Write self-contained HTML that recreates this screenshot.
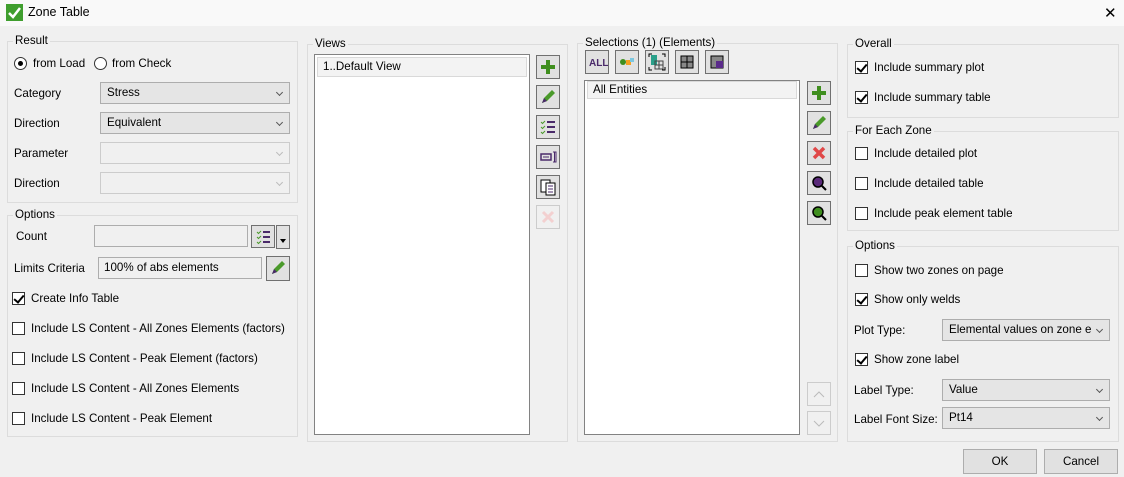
<!DOCTYPE html>
<html><head><meta charset="utf-8"><style>
*{box-sizing:border-box;margin:0;padding:0}
body{width:1124px;height:477px;background:#f0f0f0;font-family:"Liberation Sans",sans-serif;font-size:11.6px;color:#000;position:relative;overflow:hidden}
.a{position:absolute}
.title{left:0;top:0;width:1124px;height:26px;background:#f9f9f9}
.grp{position:absolute;border:1px solid #dcdcdc}
.lg{position:absolute;background:#f0f0f0;padding:0 2px;top:-9px;left:5px;line-height:16px}
.cb{position:absolute;width:13px;height:13px;border:1px solid #333;background:#fff}
.cb.on::after{content:"";position:absolute;left:3px;top:0px;width:4px;height:8px;border:solid #000;border-width:0 2px 2px 0;transform:rotate(40deg)}
.sel{position:absolute;height:22px;border:1px solid #adadad;background:#e5e5e5;padding-left:6px;line-height:20px}
.sel::after{content:"";position:absolute;right:7px;top:7px;width:4px;height:4px;border:solid #555;border-width:0 1px 1px 0;transform:rotate(45deg)}
.sel.dis{border-color:#ccc;background:#f0f0f0}
.sel.dis::after{border-color:#bbb}
.tb{position:absolute;height:22px;border:1px solid #adadad;background:#f0f0f0;padding-left:5px;line-height:20px}
.btn{position:absolute;width:24px;height:24px;border:1px solid #707070;background:#e1e1e1}
.btn.dis{border-color:#ccc;background:#f0f0f0}
.list{position:absolute;border:1px solid #828282;background:#fff}
.item{position:absolute;left:2px;right:2px;top:2px;height:20px;background:#f3f3f3;border:1px solid #d9d9d9;padding-left:5px;line-height:18px}
.pb{position:absolute;width:74px;height:25px;border:1px solid #adadad;background:#e1e1e1;text-align:center;line-height:23px}
svg{position:absolute;left:0;top:0}
</style></head><body>
<div class="a title"></div>
<div class="a" style="left:6px;top:4px;width:17px;height:17px;background:#3f9e2e"><svg width="17" height="17"><path d="M3 9 L7 13 L14 4" stroke="#fff" stroke-width="2.5" fill="none"/></svg></div>
<div class="a" style="left:28px;top:5px;font-size:12.5px">Zone Table</div>
<div class="a" style="left:1104px;top:4px;font-size:15px">✕</div>

<div class="grp" style="left:7px;top:41px;width:291px;height:162px"><div class="lg">Result</div></div>
<div class="a" style="left:14px;top:57px;width:13px;height:13px;border:1px solid #333;border-radius:50%;background:#fff"><div style="position:absolute;left:3px;top:3px;width:5px;height:5px;border-radius:50%;background:#000"></div></div>
<div class="a" style="left:33px;top:57px">from Load</div>
<div class="a" style="left:94px;top:57px;width:13px;height:13px;border:1px solid #333;border-radius:50%;background:#fff"></div>
<div class="a" style="left:112px;top:57px">from Check</div>
<div class="a" style="left:14px;top:87px">Category</div>
<div class="sel" style="left:100px;top:82px;width:190px">Stress</div>
<div class="a" style="left:14px;top:117px">Direction</div>
<div class="sel" style="left:100px;top:112px;width:190px">Equivalent</div>
<div class="a" style="left:14px;top:147px">Parameter</div>
<div class="sel dis" style="left:100px;top:142px;width:190px"></div>
<div class="a" style="left:14px;top:177px">Direction</div>
<div class="sel dis" style="left:100px;top:172px;width:190px"></div>

<div class="grp" style="left:7px;top:215px;width:291px;height:222px"><div class="lg">Options</div></div>
<div class="a" style="left:16px;top:230px">Count</div>
<div class="tb" style="left:94px;top:225px;width:154px"></div>
<div class="btn" style="left:251px;top:225px;height:23px"><svg width="22" height="22"><path d="M5 6l1.5 1.5L9 5M5 11l1.5 1.5L9 10M5 16l1.5 1.5L9 15" stroke="#4a9a2a" fill="none"/><path d="M11 6h7M11 11h7M11 16h7" stroke="#4a2a6a" stroke-width="2"/></svg></div>
<div class="btn" style="left:276px;top:225px;width:14px;height:24px"><svg width="12" height="22"><path d="M3 13h6l-3 4z" fill="#000"/></svg></div>
<div class="a" style="left:14px;top:262px">Limits Criteria</div>
<div class="tb" style="left:98px;top:257px;width:164px">100% of abs elements</div>
<div class="btn" style="left:266px;top:256px;width:24px;height:25px"><svg width="22" height="22"><path d="M5 17l2-5 8-8 3 3-8 8z" fill="#4a9a2a"/><path d="M5 17l2-5 3 3z" fill="#4a2a6a"/></svg></div>
<div class="cb on" style="left:12px;top:292px"></div><div class="a" style="left:31px;top:292px">Create Info Table</div>
<div class="cb" style="left:12px;top:322px"></div><div class="a" style="left:31px;top:322px">Include LS Content - All Zones Elements (factors)</div>
<div class="cb" style="left:12px;top:352px"></div><div class="a" style="left:31px;top:352px">Include LS Content - Peak Element (factors)</div>
<div class="cb" style="left:12px;top:382px"></div><div class="a" style="left:31px;top:382px">Include LS Content - All Zones Elements</div>
<div class="cb" style="left:12px;top:412px"></div><div class="a" style="left:31px;top:412px">Include LS Content - Peak Element</div>

<div class="grp" style="left:307px;top:44px;width:261px;height:398px"><div class="lg">Views</div></div>
<div class="list" style="left:314px;top:54px;width:216px;height:381px"><div class="item">1..Default View</div></div>
<div class="btn" style="left:536px;top:55px"><svg width="22" height="22"><path d="M11 4v14M4 11h14" stroke="#3f8e1e" stroke-width="4"/></svg></div>
<div class="btn" style="left:536px;top:85px"><svg width="22" height="22"><path d="M5 17l2-5 8-8 3 3-8 8z" fill="#4a9a2a"/><path d="M5 17l2-5 3 3z" fill="#4a2a6a"/></svg></div>
<div class="btn" style="left:536px;top:115px"><svg width="22" height="22"><path d="M4 6l1.5 1.5L8 5M4 11l1.5 1.5L8 10M4 16l1.5 1.5L8 15" stroke="#4a9a2a" fill="none"/><path d="M10 6h8M10 11h8M10 16h8" stroke="#4a2a6a" stroke-width="2"/></svg></div>
<div class="btn" style="left:536px;top:145px"><svg width="22" height="22"><rect x="4" y="8" width="10" height="6" fill="none" stroke="#4a2a6a" stroke-width="1.5"/><path d="M6 11h6M16 6h3v10h-3M17.5 6v10" stroke="#4a2a6a" fill="none"/></svg></div>
<div class="btn" style="left:536px;top:175px"><svg width="22" height="22"><rect x="4" y="4" width="9" height="12" fill="#fff" stroke="#000"/><rect x="9" y="7" width="9" height="12" fill="#fff" stroke="#000"/><path d="M11 10h5M11 13h5M11 16h5" stroke="#4a2a6a"/></svg></div>
<div class="btn dis" style="left:536px;top:205px"><svg width="22" height="22"><path d="M6 6l10 10M16 6L6 16" stroke="#f3d0d0" stroke-width="3"/></svg></div>

<div class="grp" style="left:577px;top:43px;width:261px;height:399px"><div class="lg">Selections (1) (Elements)</div></div>
<div class="btn" style="left:585px;top:50px"><svg width="22" height="22"><text x="3" y="15" font-family="Liberation Sans" font-weight="bold" font-size="10" fill="#4a2a6a">ALL</text></svg></div>
<div class="btn" style="left:615px;top:50px"><svg width="22" height="22"><circle cx="7" cy="11" r="3" fill="#3f8e1e"/><rect x="10" y="9" width="5" height="5" fill="#f4a020"/><rect x="14" y="7" width="4" height="4" fill="#7bc7e0"/></svg></div>
<div class="btn" style="left:645px;top:50px"><svg width="22" height="22"><rect x="5" y="4" width="6" height="10" fill="#2aa08a"/><rect x="9" y="10" width="8" height="8" fill="none" stroke="#444"/><path d="M13 10v8M9 14h8" stroke="#444"/><path d="M3 6V3h3M19 6V3h-3M3 16v3h3M19 16v3h-3" stroke="#000" fill="none"/></svg></div>
<div class="btn" style="left:675px;top:50px"><svg width="22" height="22"><rect x="5" y="5" width="12" height="12" fill="#888" stroke="#000"/><path d="M11 5v12M5 11h12" stroke="#000"/></svg></div>
<div class="btn" style="left:705px;top:50px"><svg width="22" height="22"><rect x="5" y="5" width="12" height="12" fill="#888" stroke="#000"/><rect x="10" y="10" width="7" height="7" fill="#5a2a8a"/></svg></div>
<div class="list" style="left:584px;top:80px;width:216px;height:355px"><div class="item" style="top:0;height:18px;line-height:16px">All Entities</div></div>
<div class="btn" style="left:807px;top:81px"><svg width="22" height="22"><path d="M11 4v14M4 11h14" stroke="#3f8e1e" stroke-width="4"/></svg></div>
<div class="btn" style="left:807px;top:111px"><svg width="22" height="22"><path d="M5 17l2-5 8-8 3 3-8 8z" fill="#4a9a2a"/><path d="M5 17l2-5 3 3z" fill="#4a2a6a"/></svg></div>
<div class="btn" style="left:807px;top:141px"><svg width="22" height="22"><path d="M6 6l10 10M16 6L6 16" stroke="#e04848" stroke-width="3.5"/></svg></div>
<div class="btn" style="left:807px;top:171px"><svg width="22" height="22"><circle cx="10" cy="10" r="5" fill="#5a2a7a" stroke="#000" stroke-width="1.5"/><path d="M14 14l4 4" stroke="#000" stroke-width="2"/></svg></div>
<div class="btn" style="left:807px;top:201px"><svg width="22" height="22"><circle cx="10" cy="10" r="5" fill="#3f8e1e" stroke="#000" stroke-width="1.5"/><path d="M14 14l4 4" stroke="#000" stroke-width="2"/></svg></div>
<div class="btn dis" style="left:807px;top:382px"><svg width="22" height="22"><path d="M6 14l5-5 5 5" stroke="#bbb" fill="none"/></svg></div>
<div class="btn dis" style="left:807px;top:411px"><svg width="22" height="22"><path d="M6 9l5 5 5-5" stroke="#bbb" fill="none"/></svg></div>

<div class="grp" style="left:847px;top:44px;width:272px;height:74px"><div class="lg">Overall</div></div>
<div class="cb on" style="left:855px;top:61px"></div><div class="a" style="left:874px;top:61px">Include summary plot</div>
<div class="cb on" style="left:855px;top:91px"></div><div class="a" style="left:874px;top:91px">Include summary table</div>
<div class="grp" style="left:847px;top:131px;width:272px;height:100px"><div class="lg">For Each Zone</div></div>
<div class="cb" style="left:855px;top:147px"></div><div class="a" style="left:874px;top:147px">Include detailed plot</div>
<div class="cb" style="left:855px;top:177px"></div><div class="a" style="left:874px;top:177px">Include detailed table</div>
<div class="cb" style="left:855px;top:207px"></div><div class="a" style="left:874px;top:207px">Include peak element table</div>
<div class="grp" style="left:847px;top:246px;width:272px;height:196px"><div class="lg">Options</div></div>
<div class="cb" style="left:855px;top:264px"></div><div class="a" style="left:874px;top:264px">Show two zones on page</div>
<div class="cb on" style="left:855px;top:293px"></div><div class="a" style="left:874px;top:293px">Show only welds</div>
<div class="a" style="left:854px;top:324px">Plot Type:</div>
<div class="sel" style="left:942px;top:319px;width:168px;overflow:hidden;white-space:nowrap;padding-right:18px">Elemental values on zone e</div>
<div class="cb on" style="left:855px;top:353px"></div><div class="a" style="left:874px;top:353px">Show zone label</div>
<div class="a" style="left:854px;top:384px">Label Type:</div>
<div class="sel" style="left:942px;top:379px;width:168px">Value</div>
<div class="a" style="left:854px;top:413px">Label Font Size:</div>
<div class="sel" style="left:942px;top:407px;width:168px">Pt14</div>

<div class="pb" style="left:963px;top:449px">OK</div>
<div class="pb" style="left:1044px;top:449px">Cancel</div>
</body></html>
